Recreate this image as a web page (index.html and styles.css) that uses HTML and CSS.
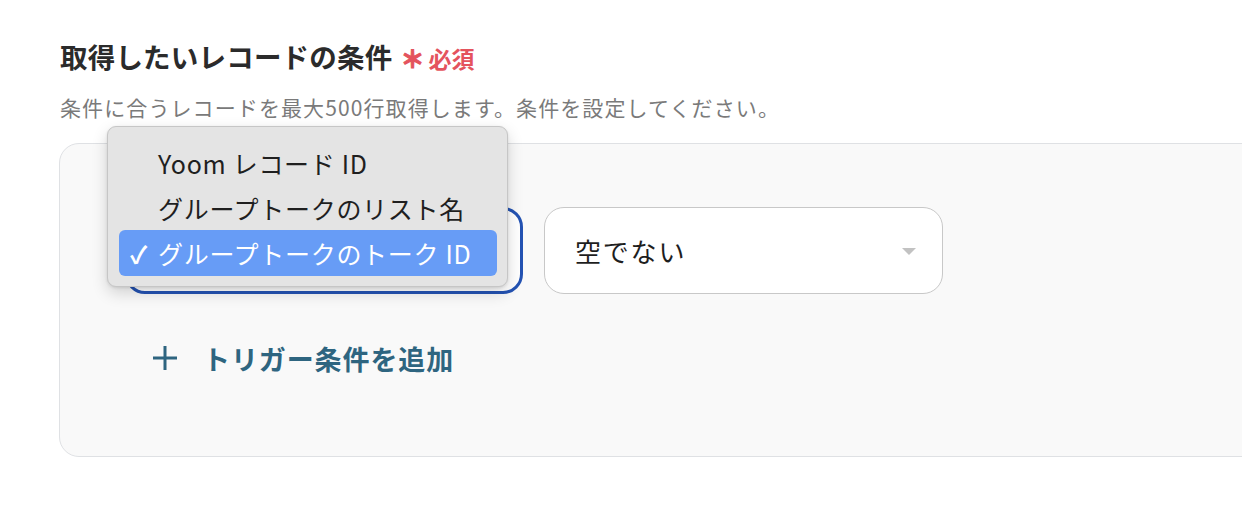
FILE: index.html
```html
<!DOCTYPE html>
<html lang="ja">
<head>
<meta charset="utf-8">
<link rel="stylesheet" href="styles.css">
</head>
<body>
<div class="page">
  <div class="title-row">
    <h2 class="title">取得したいレコードの条件</h2>
    <span class="required"><span class="ast">＊</span>必須</span>
  </div>
  <p class="subtitle">条件に合うレコードを最大500行取得します。条件を設定してください。</p>
  <div class="panel">
    <div class="cond-row">
      <div class="select select-active">
        <div class="menu">
          <div class="menu-item">Yoom レコード ID</div>
          <div class="menu-item">グループトークのリスト名</div>
          <div class="menu-item selected"><span class="check">✓</span>グループトークのトーク ID</div>
        </div>
      </div>
      <div class="select">
        <span class="select-text">空でない</span>
        <span class="caret"></span>
      </div>
    </div>
    <div class="add-row">
      <svg class="plus" width="26" height="26" viewBox="0 0 26 26"><path d="M13 1v24M1 13h24" stroke="#2e6580" stroke-width="3" fill="none"/></svg>
      <span class="add-text">トリガー条件を追加</span>
    </div>
  </div>
</div>
</body>
</html>
```

FILE: styles.css
```css
html, body {
  margin: 0;
  padding: 0;
  background: #ffffff;
  font-family: "Noto Sans CJK JP", "Noto Sans", sans-serif;
  overflow: hidden;
}
.page {
  padding: 36px 0 0 60px;
  width: 1242px;
  box-sizing: border-box;
}
.title-row {
  display: flex;
  align-items: center;
  height: 40px;
}
.title {
  margin: 0;
  font-size: 27.5px;
  font-weight: 700;
  color: #2b2b2b;
  line-height: 40px;
  letter-spacing: 0.2px;
}
.required {
  margin-left: 8px;
  font-size: 23px;
  font-weight: 700;
  color: #e4535d;
  display: flex;
  align-items: center;
  line-height: 40px;
  margin-top: 4px;
}
.ast {
  font-size: 24px;
  font-weight: 900;
  margin-right: 4px;
  -webkit-text-stroke: 1px #e4535d;
}
.subtitle {
  margin: 16px 0 0 0;
  font-size: 21px;
  line-height: 30px;
  color: #7a7a7a;
  letter-spacing: 1.1px;
}
.panel {
  margin-top: 21px;
  margin-left: -1px;
  width: 1220px;
  height: 314px;
  box-sizing: border-box;
  border: 1.5px solid #dfe1e4;
  border-radius: 20px;
  background: #f9f9f9;
  padding: 63px 0 0 65px;
}
.cond-row {
  display: flex;
  gap: 21px;
}
.select {
  position: relative;
  width: 399px;
  height: 87px;
  box-sizing: border-box;
  border: 1.5px solid #c8c8c8;
  border-radius: 20px;
  background: #ffffff;
  display: flex;
  align-items: center;
  padding: 0 26px 0 30px;
}
.select-active {
  border: 3px solid #2453b3;
  width: 398px;
}
.select-text {
  flex: 1;
  font-size: 26px;
  color: #1e1e1e;
  letter-spacing: 1.8px;
}
.caret {
  width: 0;
  height: 0;
  border-left: 7px solid transparent;
  border-right: 7px solid transparent;
  border-top: 7px solid #c2c2c2;
  margin-top: 2px;
}
.menu {
  position: absolute;
  left: -21px;
  top: -84px;
  width: 401px;
  box-sizing: border-box;
  padding: 13px 10px 10px 11px;
  background: #e4e4e4;
  border: 1px solid #c6c6c6;
  border-radius: 9px;
  box-shadow: 0 6px 16px rgba(0, 0, 0, 0.16), 0 1px 3px rgba(0, 0, 0, 0.1);
  z-index: 10;
}
.menu-item {
  height: 45px;
  display: flex;
  align-items: center;
  padding-left: 39px;
  font-size: 25px;
  color: #1f1f1f;
  border-radius: 6px;
  position: relative;
  letter-spacing: 0.7px;
  white-space: nowrap;
}
.menu-item.selected {
  background: #679cf6;
  color: #ffffff;
  height: 46px;
}
.check {
  position: absolute;
  left: 11px;
  font-size: 24px;
  font-weight: 700;
}
.add-row {
  display: flex;
  align-items: center;
  margin: 39px 0 0 27px;
  height: 50px;
}
.plus {
  display: block;
}
.add-text {
  margin-left: 25px;
  font-size: 27px;
  font-weight: 700;
  color: #2e6580;
  letter-spacing: 0.9px;
}
```
